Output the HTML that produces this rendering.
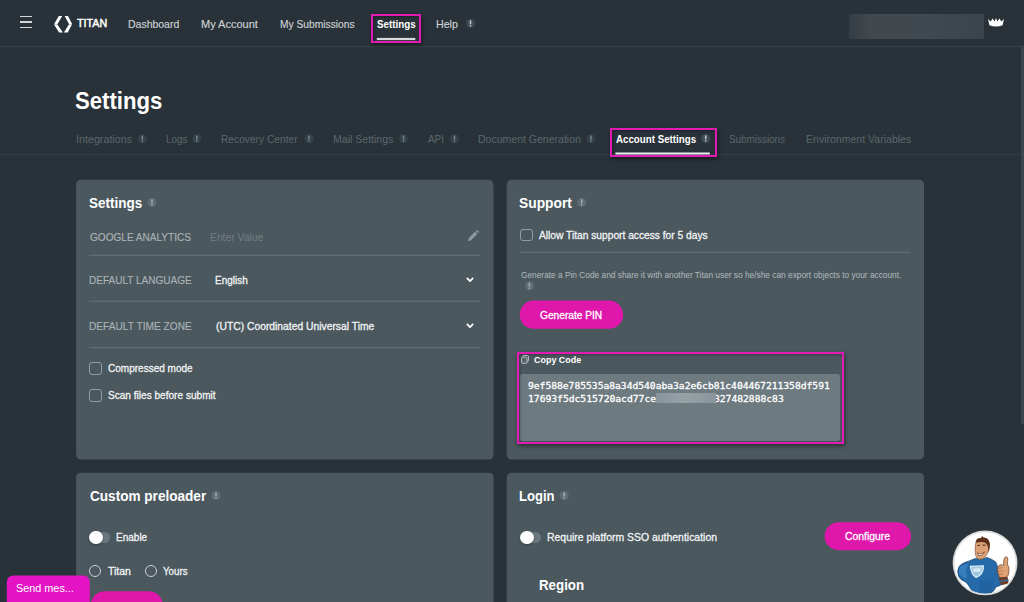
<!DOCTYPE html>
<html lang="en">
<head>
<meta charset="utf-8">
<title>Titan - Settings</title>
<style>
html,body{margin:0;padding:0}
body{width:1024px;height:602px;overflow:hidden;position:relative;background:#283238;font-family:"Liberation Sans",sans-serif;-webkit-font-smoothing:antialiased}
.abs,.t,.ic,.card,.hl,.btn,.cb,.rd,.ln,.tg{position:absolute;box-sizing:border-box}
.t{white-space:nowrap;line-height:1;transform-origin:0 50%;font-family:"Liberation Sans",sans-serif}
.ic{border-radius:50%}
.ic i{position:absolute;left:50%;top:50%;width:2px;height:6px;margin:-3px 0 0 -1px;border-radius:.5px;display:block}
.card{background:#4b585e;border-radius:6px}
.hl{border:2px solid #e21bb4;box-shadow:1px 2px 4px rgba(0,0,0,.45), inset 1px 1px 3px rgba(0,0,0,.3)}
.btn{background:#df17aa;border-radius:14px}
.cb{width:12.6px;height:12.4px;border:1px solid #929da2;border-radius:3px}
.rd{width:12.4px;height:12.4px;border:1px solid #c9cfd2;border-radius:50%}
.ln{height:1px;background:#66747a}
.tg{width:17px;height:11px;border-radius:5.5px;background:#6a777d}
.tg b{position:absolute;left:-3.9px;top:-1.2px;width:13.4px;height:13.4px;border-radius:50%;background:#fff;box-shadow:0 1px 2px rgba(0,0,0,.35)}
</style>
</head>
<body>
<svg class="abs" style="left:0;top:0" width="1024" height="602" viewBox="0 0 1024 602">
  <rect x="0" y="46.1" width="1024" height="1.05" fill="#37424a"/>
  <rect x="0" y="154" width="1024" height="1.15" fill="#343e44"/>
  <rect x="1021.1" y="47.3" width="3" height="377" fill="#3c474d"/>
  <rect x="76.1" y="179.8" width="417.4" height="279.75" rx="4.8" fill="#4b585e"/>
  <rect x="506.75" y="179.8" width="417.25" height="279.75" rx="4.8" fill="#4b585e"/>
  <rect x="76.1" y="472.65" width="417.4" height="160" rx="4.8" fill="#4b585e"/>
  <rect x="506.75" y="472.65" width="417.25" height="160" rx="4.8" fill="#4b585e"/>
  <g fill="#66747a">
    <rect x="89" y="254.8" width="391" height="1"/>
    <rect x="89" y="300.7" width="391" height="1"/>
    <rect x="89" y="347.1" width="391" height="1"/>
    <rect x="520" y="251.8" width="390.6" height="1"/>
  </g>
  <g fill="#df17aa">
    <rect x="519.7" y="300.6" width="103.4" height="28.2" rx="14.1"/>
    <rect x="824.6" y="522.3" width="86.5" height="27.9" rx="13.95"/>
    <rect x="90.8" y="591.2" width="72" height="28" rx="14"/>
  </g>
  <rect x="6.8" y="575.4" width="83" height="40" rx="6.5" fill="#e414c4"/>
</svg>
<!-- header -->
<div class="abs" style="left:20px;top:16.0px;width:12px;height:1.4px;background:#d2d6d8"></div>
<div class="abs" style="left:20px;top:21.3px;width:12px;height:1.4px;background:#d2d6d8"></div>
<div class="abs" style="left:20px;top:26.6px;width:12px;height:1.4px;background:#d2d6d8"></div>
<svg class="abs" style="left:53.8px;top:15.8px" width="19" height="17" viewBox="0 0 19 17">
  <path d="M4.8 0 L8.2 0 L3.4 8.2 L0 8.2 Z M0 8.6 L3.4 8.6 L8.9 16.4 L5.1 16.4 Z M10.6 0 L14 0 L18.1 7.9 L15 7.9 Z M15 8.3 L18.1 8.3 L13.7 16.4 L9.9 16.4 Z" fill="#fff"/>
</svg>
<div class="hl" style="left:371px;top:14px;width:50px;height:29px"></div>
<div class="abs" style="left:849px;top:14px;width:135px;height:25px;background:linear-gradient(90deg,#343d43 0%,#41494f 16%,#40494f 60%,#3b444a 100%)"></div>
<svg class="abs" style="left:988px;top:17.5px" width="16" height="9" viewBox="0 0 16 9">
  <path d="M0 1 L2.6 3.6 L4.6 0.4 L6.6 3.4 L8 0 L9.4 3.4 L11.4 0.4 L13.4 3.6 L16 1 L14.6 7.2 Q8 9.8 1.4 7.2 Z" fill="#fff"/>
</svg>

<!-- tabs -->
<div class="hl" style="left:610px;top:128px;width:107px;height:29px"></div>

<!-- cards -->

<!-- card 1 -->
<svg class="abs" style="left:468px;top:229.8px" width="11" height="11" viewBox="0 0 11 11">
  <path d="M0 11 L0.6 8.2 L7.2 1.6 L9.4 3.8 L2.8 10.4 Z M7.9 0.9 L8.6 0.2 Q9 -0.1 9.4 0.3 L10.7 1.6 Q11.1 2 10.8 2.4 L10.1 3.1 Z" fill="#8f9aa0"/>
</svg>
<svg class="abs" style="left:466px;top:277px" width="8" height="6" viewBox="0 0 8 6"><path d="M1.3 1.3 L4 4.1 L6.7 1.3" fill="none" stroke="#fff" stroke-width="1.7" stroke-linecap="round" stroke-linejoin="round"/></svg>
<svg class="abs" style="left:466px;top:323.2px" width="8" height="6" viewBox="0 0 8 6"><path d="M1.3 1.3 L4 4.1 L6.7 1.3" fill="none" stroke="#fff" stroke-width="1.7" stroke-linecap="round" stroke-linejoin="round"/></svg>
<div class="cb" style="left:89.1px;top:362.3px"></div>
<div class="cb" style="left:89.1px;top:389.4px"></div>

<!-- card 2 -->
<div class="cb" style="left:520px;top:228.5px"></div>
<div class="abs" style="left:520.2px;top:374px;width:320px;height:67.2px;background:#6d7a80;border-radius:3px"></div>
<div class="hl" style="left:516.5px;top:352px;width:327.7px;height:91.7px"></div>
<svg class="abs" style="left:521px;top:355px" width="8" height="9" viewBox="0 0 8 9">
  <rect x="1.6" y="0.5" width="5.9" height="6.2" rx="1.3" fill="none" stroke="#b4bcc0" stroke-width="1"/>
  <rect x="0.5" y="2.2" width="5.6" height="6.2" rx="1.3" fill="#5a676d" stroke="#b4bcc0" stroke-width="1"/>
</svg>
<div class="abs" style="z-index:3;left:655.8px;top:393px;width:60.4px;height:10px;background:linear-gradient(90deg,#87939a,#97a2a7 45%,#8a969b)"></div>

<!-- card 3 -->
<div class="tg" style="left:93px;top:531.7px"><b></b></div>
<div class="rd" style="left:89px;top:565px"></div>
<div class="rd" style="left:144.7px;top:565px"></div>

<!-- card 4 -->
<div class="tg" style="left:524px;top:531.7px"><b></b></div>

<!-- scrollbar -->

<!-- mascot -->
<svg class="abs" style="left:950px;top:528px" width="70" height="70" viewBox="0 0 70 70">
  <defs><clipPath id="mc"><circle cx="35.05" cy="34.95" r="30.6"/></clipPath></defs>
  <circle cx="35.05" cy="34.95" r="32.4" fill="#dadbdb"/>
  <circle cx="35.05" cy="34.95" r="30.7" fill="#ffffff"/>
  <g clip-path="url(#mc)">
    <!-- body -->
    <path d="M25.5 30.4 Q31 32.4 37 29.4 Q42 31 45.7 34 Q47.6 37 47.6 41 L48.8 49.3 L55.5 54 L50 57.5 Q47 58.5 45.8 59 Q44.6 62.5 42 64.5 Q34 67.5 24 65.5 Q20.5 61 18.6 57.5 Q17 54.5 14.5 53.4 Q10 52 8.6 48 Q6.6 43 9 38.6 Q12 34.6 18 33.4 Z" fill="#266aa9" stroke="#153d66" stroke-width=".7"/>
    <path d="M9 40 Q12 36 18 36 Q15 42 17 50 Q12 50 9 45 Z" fill="#3c86c6" opacity=".7"/>
    <path d="M30 52 Q36 54 43 50 Q44 57 42 63 Q35 66 28 64 Q31 58 30 52 Z" fill="#1f5f9c" opacity=".7"/>
    <!-- emblem -->
    <path d="M20.4 38.4 L33.4 37.8 Q33.6 44 30 47.2 Q28 49 25.9 49.4 Q21.4 46.6 20.4 38.4 Z" fill="#9cc6e2" stroke="#e6f1f8" stroke-width="1.1"/>
    <rect x="23.3" y="40.2" width="7.4" height="3.6" rx=".8" fill="#d6e8f4"/>
    <!-- head -->
    <path d="M26 13.6 Q25 18 25.1 22 Q25.2 26 25.9 28 Q27 30.6 28.9 31.3 Q31.4 31.6 33.5 30.2 Q36 28.4 37.4 25.6 Q38.9 22 38.9 18.5 Q38.8 14 37 11.6 Q32 9.6 28 11 Z" fill="#dca276" stroke="#5a3018" stroke-width=".5"/>
    <path d="M26.4 14.8 Q25.4 11.6 28 10.6 Q29.6 10.2 31 10 Q31.6 8.4 32.6 8 Q32.8 9.2 33.6 9.6 Q37 9.6 38.6 12 Q40.4 15 39.9 18 Q39.6 21.6 38.6 24.4 Q38 22 38.2 19.4 Q37.6 16.4 35.4 14.8 Q31 13 26.4 14.8 Z" fill="#5b2e18"/>
    <path d="M27.4 17.6 L30 17.2 M32.4 17 L35.6 17.2" stroke="#4a2412" stroke-width="1"/>
    <path d="M27.6 24.6 Q30.6 27.6 34.6 23.8 Q32 28.8 28.6 27.4 Z" fill="#fff" stroke="#6b3018" stroke-width=".7"/>
    <path d="M29 30.8 Q31.4 31.6 33.5 30.2" stroke="#b77d55" stroke-width=".8" fill="none"/>
    <!-- fist + thumb -->
    <path d="M53.6 37.4 Q53.2 33 54.2 30.4 Q55 28.4 56.6 28.8 Q58.2 29.4 57.8 32 L57.4 36.6 Q59.4 38.4 59 43 Q59 47.6 56.4 49.6 L50 49.8 Q47.4 46 47.4 41.4 Q47.6 37.6 50.4 36.6 Z" fill="#dca276" stroke="#5a3018" stroke-width=".6"/>
    <path d="M48 40.2 L52.6 39.6 M47.8 43.2 L52.8 42.8 M48.4 46.2 L53 46" stroke="#a8693f" stroke-width=".7"/>
    <path d="M48.8 49.6 L57.4 48.8 Q58.8 52 58.4 55.6 L51.6 57.2 Q49 54 48.8 49.6 Z" fill="#6d3c22"/>
    <path d="M49.6 53.4 L58.4 52" stroke="#2a6fb0" stroke-width="1.4"/>
  </g>
</svg>

<svg class="abs" style="left:0;top:0" width="1024" height="602" viewBox="0 0 1024 602"><circle cx="470.5" cy="23.4" r="4.5" fill="#3f4b52"/><rect x="469.75" y="20.299999999999997" width="1.5" height="4" fill="#c3cace"/><rect x="469.75" y="25.099999999999998" width="1.5" height="1.4" fill="#c3cace"/>
<circle cx="142.3" cy="138.7" r="4.5" fill="#36424a"/><rect x="141.55" y="135.6" width="1.5" height="4" fill="#76858e"/><rect x="141.55" y="140.39999999999998" width="1.5" height="1.4" fill="#76858e"/>
<circle cx="196.8" cy="138.7" r="4.5" fill="#36424a"/><rect x="196.05" y="135.6" width="1.5" height="4" fill="#76858e"/><rect x="196.05" y="140.39999999999998" width="1.5" height="1.4" fill="#76858e"/>
<circle cx="309" cy="138.7" r="4.5" fill="#36424a"/><rect x="308.25" y="135.6" width="1.5" height="4" fill="#76858e"/><rect x="308.25" y="140.39999999999998" width="1.5" height="1.4" fill="#76858e"/>
<circle cx="403.5" cy="138.7" r="4.5" fill="#36424a"/><rect x="402.75" y="135.6" width="1.5" height="4" fill="#76858e"/><rect x="402.75" y="140.39999999999998" width="1.5" height="1.4" fill="#76858e"/>
<circle cx="454.5" cy="138.7" r="4.5" fill="#36424a"/><rect x="453.75" y="135.6" width="1.5" height="4" fill="#76858e"/><rect x="453.75" y="140.39999999999998" width="1.5" height="1.4" fill="#76858e"/>
<circle cx="591" cy="138.7" r="4.5" fill="#36424a"/><rect x="590.25" y="135.6" width="1.5" height="4" fill="#76858e"/><rect x="590.25" y="140.39999999999998" width="1.5" height="1.4" fill="#76858e"/>
<circle cx="705.7" cy="138.5" r="4.5" fill="#3f4b52"/><rect x="704.95" y="135.4" width="1.5" height="4" fill="#c3cace"/><rect x="704.95" y="140.2" width="1.5" height="1.4" fill="#c3cace"/>
<circle cx="152" cy="202.4" r="4.5" fill="#5f6d74"/><rect x="151.25" y="199.3" width="1.5" height="4" fill="#a3b0b8"/><rect x="151.25" y="204.1" width="1.5" height="1.4" fill="#a3b0b8"/>
<circle cx="581.7" cy="202.4" r="4.5" fill="#5f6d74"/><rect x="580.95" y="199.3" width="1.5" height="4" fill="#a3b0b8"/><rect x="580.95" y="204.1" width="1.5" height="1.4" fill="#a3b0b8"/>
<circle cx="216" cy="495.5" r="4.5" fill="#5f6d74"/><rect x="215.25" y="492.4" width="1.5" height="4" fill="#a3b0b8"/><rect x="215.25" y="497.2" width="1.5" height="1.4" fill="#a3b0b8"/>
<circle cx="564.2" cy="495.5" r="4.5" fill="#5f6d74"/><rect x="563.45" y="492.4" width="1.5" height="4" fill="#a3b0b8"/><rect x="563.45" y="497.2" width="1.5" height="1.4" fill="#a3b0b8"/>
<circle cx="529.4" cy="285.8" r="4.5" fill="#5f6d74"/><rect x="528.65" y="282.7" width="1.5" height="4" fill="#a3b0b8"/><rect x="528.65" y="287.5" width="1.5" height="1.4" fill="#a3b0b8"/>
<rect x="376.8" y="37.9" width="38.5" height="2.2" fill="#d6dadc"/>
<rect x="615.4" y="152.5" width="94.4" height="2" fill="#eceeef"/></svg>
<span class="t" id="t0" style="left:77.10px;top:18px;line-height:11px;font-size:10.3px;font-weight:400;color:#fffffe;font-family:'Liberation Sans', sans-serif;transform:scaleX(1.0414);-webkit-text-stroke:0.45px;">TITAN</span>
<span class="t" id="t1" style="left:127.80px;top:18px;line-height:12px;font-size:11px;font-weight:400;color:#cfd3d5;font-family:'Liberation Sans', sans-serif;transform:scaleX(0.9528);-webkit-text-stroke:0.15px;">Dashboard</span>
<span class="t" id="t2" style="left:201.10px;top:18px;line-height:12px;font-size:11px;font-weight:400;color:#cfd3d5;font-family:'Liberation Sans', sans-serif;transform:scaleX(1.0003);-webkit-text-stroke:0.15px;">My Account</span>
<span class="t" id="t3" style="left:279.80px;top:18px;line-height:12px;font-size:11px;font-weight:400;color:#cfd3d5;font-family:'Liberation Sans', sans-serif;transform:scaleX(0.9313);-webkit-text-stroke:0.15px;">My Submissions</span>
<span class="t" id="t4" style="left:377.10px;top:18px;line-height:12px;font-size:11px;font-weight:700;color:#ffffff;font-family:'Liberation Sans', sans-serif;transform:scaleX(0.8907);">Settings</span>
<span class="t" id="t5" style="left:435.90px;top:18px;line-height:12px;font-size:11px;font-weight:400;color:#cfd3d5;font-family:'Liberation Sans', sans-serif;transform:scaleX(0.9682);-webkit-text-stroke:0.15px;">Help</span>
<span class="t" id="t6" style="left:74.90px;top:87px;line-height:27px;font-size:24.5px;font-weight:700;color:#ffffff;font-family:'Liberation Sans', sans-serif;transform:scaleX(0.9042);">Settings</span>
<span class="t" id="t7" style="left:76.00px;top:133px;line-height:12px;font-size:11px;font-weight:400;color:#5c676d;font-family:'Liberation Sans', sans-serif;transform:scaleX(0.9750);">Integrations</span>
<span class="t" id="t8" style="left:165.90px;top:133px;line-height:12px;font-size:11px;font-weight:400;color:#5c676d;font-family:'Liberation Sans', sans-serif;transform:scaleX(0.8971);">Logs</span>
<span class="t" id="t9" style="left:220.90px;top:133px;line-height:12px;font-size:11px;font-weight:400;color:#5c676d;font-family:'Liberation Sans', sans-serif;transform:scaleX(0.9280);">Recovery Center</span>
<span class="t" id="t10" style="left:333.20px;top:133px;line-height:12px;font-size:11px;font-weight:400;color:#5c676d;font-family:'Liberation Sans', sans-serif;transform:scaleX(0.9582);">Mail Settings</span>
<span class="t" id="t11" style="left:427.80px;top:133px;line-height:12px;font-size:11px;font-weight:400;color:#5c676d;font-family:'Liberation Sans', sans-serif;transform:scaleX(0.9025);">API</span>
<span class="t" id="t12" style="left:478.20px;top:133px;line-height:12px;font-size:11px;font-weight:400;color:#5c676d;font-family:'Liberation Sans', sans-serif;transform:scaleX(0.9557);">Document Generation</span>
<span class="t" id="t13" style="left:615.80px;top:133px;line-height:12px;font-size:11px;font-weight:700;color:#ffffff;font-family:'Liberation Sans', sans-serif;transform:scaleX(0.8856);">Account Settings</span>
<span class="t" id="t14" style="left:729.00px;top:133px;line-height:12px;font-size:11px;font-weight:400;color:#5c676d;font-family:'Liberation Sans', sans-serif;transform:scaleX(0.8985);">Submissions</span>
<span class="t" id="t15" style="left:806.00px;top:133px;line-height:12px;font-size:11px;font-weight:400;color:#5c676d;font-family:'Liberation Sans', sans-serif;transform:scaleX(0.9578);">Environment Variables</span>
<span class="t" id="t16" style="left:88.80px;top:194px;line-height:17px;font-size:15.3px;font-weight:700;color:#ffffff;font-family:'Liberation Sans', sans-serif;transform:scaleX(0.8831);">Settings</span>
<span class="t" id="t17" style="left:89.80px;top:231px;line-height:12px;font-size:11px;font-weight:400;color:#aab2b6;font-family:'Liberation Sans', sans-serif;transform:scaleX(0.9145);-webkit-text-stroke:0.15px;">GOOGLE ANALYTICS</span>
<span class="t" id="t18" style="left:210.20px;top:231px;line-height:12px;font-size:11px;font-weight:400;color:#717e84;font-family:'Liberation Sans', sans-serif;transform:scaleX(0.9375);">Enter Value</span>
<span class="t" id="t19" style="left:89.20px;top:274px;line-height:12px;font-size:11px;font-weight:400;color:#aab2b6;font-family:'Liberation Sans', sans-serif;transform:scaleX(0.9116);-webkit-text-stroke:0.15px;">DEFAULT LANGUAGE</span>
<span class="t" id="t20" style="left:215.40px;top:274px;line-height:12px;font-size:11px;font-weight:400;color:#f2f4f5;font-family:'Liberation Sans', sans-serif;transform:scaleX(0.9057);-webkit-text-stroke:0.3px;">English</span>
<span class="t" id="t21" style="left:89.20px;top:320px;line-height:12px;font-size:11px;font-weight:400;color:#aab2b6;font-family:'Liberation Sans', sans-serif;transform:scaleX(0.9236);-webkit-text-stroke:0.15px;">DEFAULT TIME ZONE</span>
<span class="t" id="t22" style="left:215.80px;top:320px;line-height:12px;font-size:11px;font-weight:400;color:#f2f4f5;font-family:'Liberation Sans', sans-serif;transform:scaleX(0.9381);-webkit-text-stroke:0.3px;">(UTC) Coordinated Universal Time</span>
<span class="t" id="t23" style="left:107.80px;top:362px;line-height:12px;font-size:11px;font-weight:400;color:#f2f4f5;font-family:'Liberation Sans', sans-serif;transform:scaleX(0.9110);-webkit-text-stroke:0.3px;">Compressed mode</span>
<span class="t" id="t24" style="left:107.80px;top:389px;line-height:12px;font-size:11px;font-weight:400;color:#f2f4f5;font-family:'Liberation Sans', sans-serif;transform:scaleX(0.9163);-webkit-text-stroke:0.3px;">Scan files before submit</span>
<span class="t" id="t25" style="left:519.20px;top:194px;line-height:17px;font-size:15.3px;font-weight:700;color:#ffffff;font-family:'Liberation Sans', sans-serif;transform:scaleX(0.9036);">Support</span>
<span class="t" id="t26" style="left:539.20px;top:229px;line-height:12px;font-size:11px;font-weight:400;color:#f2f4f5;font-family:'Liberation Sans', sans-serif;transform:scaleX(0.9286);-webkit-text-stroke:0.3px;">Allow Titan support access for 5 days</span>
<span class="t" id="t27" style="left:520.60px;top:270px;line-height:10px;font-size:9px;font-weight:400;color:#b3babe;font-family:'Liberation Sans', sans-serif;transform:scaleX(0.9249);">Generate a Pin Code and share it with another Titan user so he/she can export objects to your account.</span>
<span class="t" id="t28" style="left:539.60px;top:309px;line-height:12px;font-size:11px;font-weight:400;color:#ffffff;font-family:'Liberation Sans', sans-serif;transform:scaleX(0.9245);-webkit-text-stroke:0.3px;">Generate PIN</span>
<span class="t" id="t29" style="left:533.90px;top:354px;line-height:11px;font-size:9.6px;font-weight:700;color:#ffffff;font-family:'Liberation Sans', sans-serif;transform:scaleX(0.9322);">Copy Code</span>
<span class="t" id="t30" style="left:527.90px;top:381px;line-height:10px;font-size:9px;font-weight:400;color:#ffffff;font-family:'DejaVu Sans Mono', 'Liberation Mono', monospace;transform:scaleX(1.0709);-webkit-text-stroke:0.25px;-webkit-text-stroke:0.3px;">9ef588e785535a8a34d540aba3a2e6cb81c404467211358df591</span>
<span class="t" id="t31" style="left:527.80px;top:394px;line-height:10px;font-size:9px;font-weight:400;color:#ffffff;font-family:'DejaVu Sans Mono', 'Liberation Mono', monospace;transform:scaleX(1.0740);-webkit-text-stroke:0.25px;-webkit-text-stroke:0.3px;">17693f5dc515720acd77ce</span>
<span class="t" id="t32" style="left:713.80px;top:394px;line-height:10px;font-size:9px;font-weight:400;color:#ffffff;font-family:'DejaVu Sans Mono', 'Liberation Mono', monospace;transform:scaleX(1.0720);-webkit-text-stroke:0.25px;-webkit-text-stroke:0.3px;">327482888c83</span>
<span class="t" id="t33" style="left:89.70px;top:487px;line-height:17px;font-size:15.3px;font-weight:700;color:#ffffff;font-family:'Liberation Sans', sans-serif;transform:scaleX(0.8877);">Custom preloader</span>
<span class="t" id="t34" style="left:115.90px;top:531px;line-height:12px;font-size:11px;font-weight:400;color:#f2f4f5;font-family:'Liberation Sans', sans-serif;transform:scaleX(0.9101);-webkit-text-stroke:0.3px;">Enable</span>
<span class="t" id="t35" style="left:108.00px;top:565px;line-height:12px;font-size:11px;font-weight:400;color:#f2f4f5;font-family:'Liberation Sans', sans-serif;transform:scaleX(0.9542);-webkit-text-stroke:0.3px;">Titan</span>
<span class="t" id="t36" style="left:162.80px;top:565px;line-height:12px;font-size:11px;font-weight:400;color:#f2f4f5;font-family:'Liberation Sans', sans-serif;transform:scaleX(0.8832);-webkit-text-stroke:0.3px;">Yours</span>
<span class="t" id="t37" style="left:16.40px;top:582px;line-height:12px;font-size:11.2px;font-weight:400;color:#fffffe;font-family:'Liberation Sans', sans-serif;transform:scaleX(0.9691);">Send mes...</span>
<span class="t" id="t38" style="left:519.20px;top:487px;line-height:17px;font-size:15.3px;font-weight:700;color:#ffffff;font-family:'Liberation Sans', sans-serif;transform:scaleX(0.8525);">Login</span>
<span class="t" id="t39" style="left:547.00px;top:531px;line-height:12px;font-size:11px;font-weight:400;color:#f2f4f5;font-family:'Liberation Sans', sans-serif;transform:scaleX(0.9489);-webkit-text-stroke:0.3px;">Require platform SSO authentication</span>
<span class="t" id="t40" style="left:845.00px;top:530px;line-height:12px;font-size:11px;font-weight:400;color:#ffffff;font-family:'Liberation Sans', sans-serif;transform:scaleX(0.9461);-webkit-text-stroke:0.3px;">Configure</span>
<span class="t" id="t41" style="left:539.20px;top:576px;line-height:17px;font-size:15.3px;font-weight:700;color:#ffffff;font-family:'Liberation Sans', sans-serif;transform:scaleX(0.8706);">Region</span>
</body>
</html>
